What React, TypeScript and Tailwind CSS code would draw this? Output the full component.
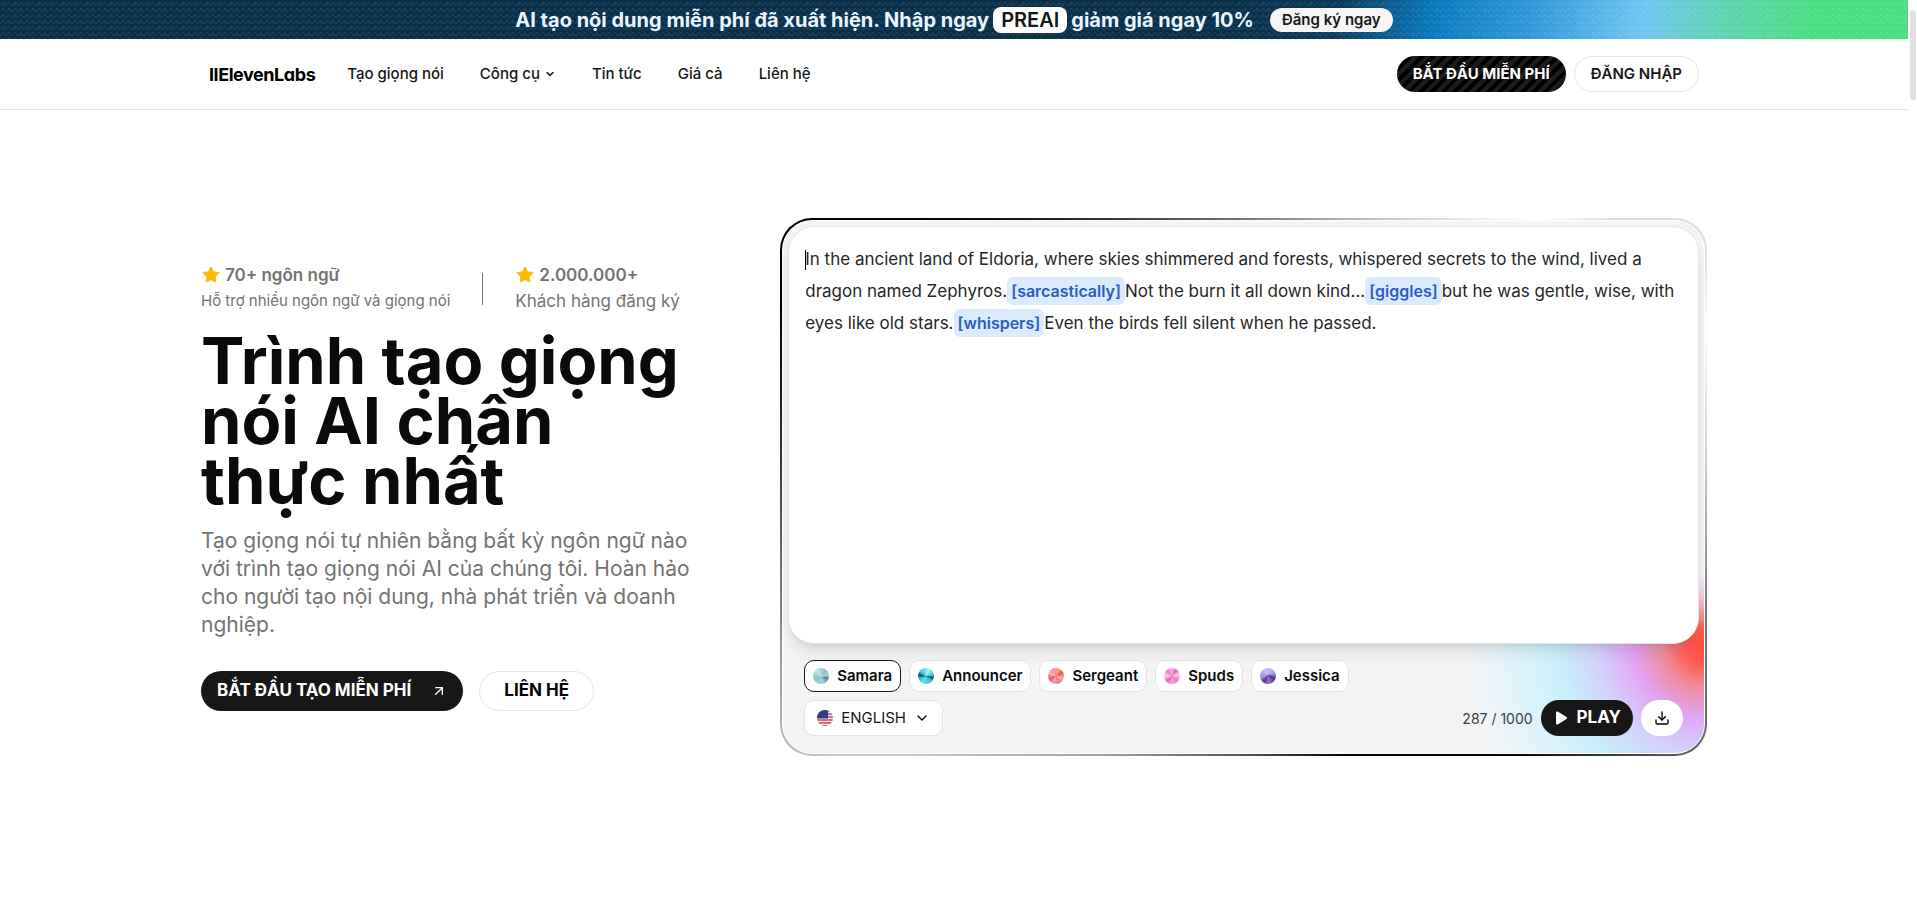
import { useState } from "react";
import { ArrowUpRight, ChevronDown, Download } from "lucide-react";
import clsx from "clsx";

const navLinks = [
  { label: "Tạo giọng nói" },
  { label: "Công cụ", menu: true },
  { label: "Tin tức" },
  { label: "Giá cả" },
  { label: "Liên hệ" },
];

const voices = [
  {
    name: "Samara",
    orb: "conic-gradient(from 100deg at 55% 55%, #4f7f8c, #7fb2bd 12%, #a9d4d8 20%, #8cc4cc 45%, #c5e4e6 60%, #8fc3ca 80%, #a8d0d5 94%, #4f7f8c)",
  },
  {
    name: "Announcer",
    orb: "conic-gradient(from 100deg at 50% 52%, #124c60, #35bcd6 8%, #6be0ee 30%, #35bcd6 42%, #124c60 50%, #3cc6dc 58%, #a5f1f7 78%, #45c6dc 94%, #124c60)",
  },
  {
    name: "Sergeant",
    orb: "conic-gradient(from 20deg, #f9a77c, #e8556e 12%, #fbb78c 24%, #ee7b88 38%, #f7a0c0 50%, #e8556e 62%, #fbb78c 76%, #f08ab0 90%, #f9a77c)",
  },
  {
    name: "Spuds",
    orb: "conic-gradient(from 0deg, #f7b0e8, #e565b4 10%, #fbd0ee 22%, #ec7fc0 36%, #f2a0dc 50%, #e565b4 62%, #fbd0ee 76%, #ec7fc0 88%, #f7b0e8)",
  },
  {
    name: "Jessica",
    orb: "conic-gradient(from 120deg at 50% 45%, #4f2f86, #9a74d0 14%, #5a3a92 26%, #a58ae6 36%, #c9c4f7 60%, #b39cea 86%, #4f2f86)",
  },
];

function Star() {
  return (
    <svg viewBox="0 0 24 24" className="size-5 fill-[#fbbc05]" aria-hidden="true">
      <path
        d="M12 3l2.7 5.6 6.1.9-4.4 4.3 1 6.1L12 17l-5.4 2.9 1-6.1-4.4-4.3 6.1-.9z"
        stroke="#fbbc05"
        strokeWidth="2"
        strokeLinejoin="round"
      />
    </svg>
  );
}

function UsFlag() {
  return (
    <svg viewBox="0 0 16 16" className="size-4" aria-hidden="true">
      <clipPath id="flag">
        <circle cx="8" cy="8" r="8" />
      </clipPath>
      <g clipPath="url(#flag)">
        <rect width="16" height="16" fill="#f3e9ee" />
        <path d="M0 1h16M0 4h16M0 7h16M0 10h16M0 13h16M0 16h16" stroke="#d0455c" strokeWidth="1.4" />
        <rect width="11" height="8.5" fill="#2c3f7c" />
      </g>
    </svg>
  );
}

function Tag({ name }: { name: string }) {
  return (
    <span className="rounded-md bg-[#dbeafe] px-1 py-1 text-[16px] font-semibold text-[#2c5cc5]">
      {`[${name}]`}
    </span>
  );
}

function Banner() {
  return (
    <div className="relative flex h-[39px] items-center justify-center gap-4 bg-[linear-gradient(100deg,#0a2f4a_0%,#0a2f4a_64%,#0b3a5c_70%,#0879bd_75%,#2f97d8_80%,#6fc6f2_86%,#5fd3b4_90%,#4ade80_95%)]">
      <svg className="absolute inset-0 size-full opacity-10" aria-hidden="true">
        <pattern id="weave" width="12" height="12" patternUnits="userSpaceOnUse">
          <path d="M0 6l3-4 3 4 3-4 3 4M0 12l3-4 3 4 3-4 3 4M3 2v4M9 8v4" fill="none" stroke="#fff" />
        </pattern>
        <rect width="100%" height="100%" fill="url(#weave)" />
      </svg>
      <p className="relative flex items-center gap-1 text-[20px] font-bold text-[#eaf6ff]">
        AI tạo nội dung miễn phí đã xuất hiện. Nhập ngay
        <span className="rounded-lg bg-white px-2 leading-[26px] font-semibold text-neutral-900">PREAI</span>
        giảm giá ngay 10%
      </p>
      <a href="#" className="relative rounded-full bg-neutral-100 px-3 text-[15px] leading-[24px] font-semibold text-neutral-900">
        Đăng ký ngay
      </a>
    </div>
  );
}

function Header() {
  return (
    <header className="border-b border-[#e2e2e2]">
      <div className="mx-auto flex h-[70px] max-w-[1538px] items-center px-6">
        <a href="#" className="text-[18px] font-bold tracking-tight text-black [font-feature-settings:'cv11']">
          IIElevenLabs
        </a>
        <nav className="ml-8 flex items-center gap-9 text-[15px] font-medium text-neutral-900">
          {navLinks.map((l) => (
            <a key={l.label} href="#" className="flex items-center gap-1">
              {l.label}
              {l.menu && <ChevronDown className="size-3" strokeWidth={3} />}
            </a>
          ))}
        </nav>
        <div className="ml-auto flex gap-2 text-[15px] font-bold">
          <button className="h-9 rounded-full bg-[repeating-linear-gradient(135deg,#000_0_4px,#1c1c1c_4px_8px)] px-4 text-white">
            BẮT ĐẦU MIỄN PHÍ
          </button>
          <button className="h-9 rounded-full border border-neutral-200 px-4 font-semibold text-neutral-900">
            ĐĂNG NHẬP
          </button>
        </div>
      </div>
    </header>
  );
}

function Intro() {
  return (
    <section>
      <div className="flex items-center gap-8 text-neutral-500">
        <div>
          <p className="flex items-center gap-1 text-[17px] leading-6 font-semibold">
            <Star />
            70+ ngôn ngữ
          </p>
          <p className="text-[15px] leading-7">Hỗ trợ nhiều ngôn ngữ và giọng nói</p>
        </div>
        <div className="h-8 w-px bg-neutral-500" />
        <div>
          <p className="flex items-center gap-1 text-[17px] leading-6 font-semibold">
            <Star />
            2.000.000+
          </p>
          <p className="text-[17px] leading-7">Khách hàng đăng ký</p>
        </div>
      </div>
      <h1 className="mt-4 max-w-[496px] text-[65px] leading-[60px] font-bold text-neutral-950">
        Trình tạo giọng nói AI chân thực nhất
      </h1>
      <p className="mt-4 max-w-[510px] text-[21px] leading-7 text-neutral-500">
        Tạo giọng nói tự nhiên bằng bất kỳ ngôn ngữ nào với trình tạo giọng nói AI của chúng tôi. Hoàn hảo cho
        người tạo nội dung, nhà phát triển và doanh nghiệp.
      </p>
      <div className="mt-8 flex gap-4 text-[17px]">
        <button className="flex h-10 items-center gap-5 rounded-full bg-neutral-900 px-4 font-bold text-white">
          BẮT ĐẦU TẠO MIỄN PHÍ
          <ArrowUpRight className="size-4" />
        </button>
        <button className="h-10 rounded-full border border-neutral-200 px-6 font-bold text-black">LIÊN HỆ</button>
      </div>
    </section>
  );
}

function Player() {
  const [voice, setVoice] = useState("Samara");

  return (
    <section className="rounded-[32px] bg-[conic-gradient(#777_0deg,#fff_48deg,#ddd_54deg,#ddd_62deg,#fff_71deg,#ccc_88deg,#777_105deg,#666_120deg,#000_135deg,#000_158deg,#555_180deg,#999_205deg,#ccc_235deg,#999_250deg,#333_275deg,#000_292deg,#000_310deg,#777_360deg)] p-[2px]">
      <div className="rounded-[30px] border border-white bg-[linear-gradient(to_bottom,#f4f4f5_66%,transparent_76%),radial-gradient(circle_at_100%_80%,#ff4d3d_0,#ff5f58_20px,#f08a9a_40px,#e3a4f5_70px,#d3d0fb_105px,#c8f0fb_145px,#e0f3fb_190px,#f4f4f5_240px)] p-[5px]">
        <div
          role="textbox"
          aria-label="Văn bản"
          aria-multiline="true"
          contentEditable
          suppressContentEditableWarning
          className="h-[418px] rounded-[26px] border border-neutral-200 bg-white py-4 pr-2 pl-4 text-[17px] leading-8 text-neutral-800 shadow-lg outline-none"
        >
          <span className="-mr-px inline-block h-5 w-px bg-black align-middle" />
          In the ancient land of Eldoria, where skies shimmered and forests, whispered secrets to the wind, lived a
          dragon named Zephyros.
          <Tag name="sarcastically" />
          Not the burn it all down kind...
          <Tag name="giggles" />
          but he was gentle, wise, with eyes like old stars.
          <Tag name="whispers" />
          Even the birds fell silent when he passed.
        </div>
        <div className="px-4 pt-4 pb-3">
          <div className="flex flex-wrap gap-2">
            {voices.map((v) => (
              <button
                key={v.name}
                aria-pressed={voice === v.name}
                onClick={() => setVoice(v.name)}
                className={clsx(
                  "flex h-8 items-center gap-2 rounded-[10px] border bg-white px-2 text-[15px] font-semibold text-neutral-950",
                  voice === v.name ? "border-neutral-900" : "border-neutral-200"
                )}
              >
                <span className="size-4 rounded-full" style={{ background: v.orb }} />
                {v.name}
              </button>
            ))}
          </div>
          <div className="mt-2 flex items-center">
            <label className="relative flex h-9 items-center rounded-[10px] border border-neutral-200 bg-white pl-3">
              <UsFlag />
              <select aria-label="Ngôn ngữ" className="appearance-none bg-transparent pr-9 pl-2 text-[15px] text-neutral-900">
                <option>ENGLISH</option>
              </select>
              <ChevronDown className="pointer-events-none absolute right-3 size-4" />
            </label>
            <span className="mr-2 ml-auto text-[14px] text-neutral-700">287 / 1000</span>
            <button className="flex h-9 items-center gap-2 rounded-full bg-neutral-900 px-3 text-[17px] font-bold text-white">
              <svg viewBox="0 0 16 16" className="size-4 fill-white" aria-hidden="true">
                <path d="M3 2.600c0-.9 1-1.400 1.700-1L13.500 7.100c.7.400.7 1.400 0 1.800L4.700 14.400c-.7.400-1.700-.1-1.700-1z" />
              </svg>
              PLAY
            </button>
            <button aria-label="Tải xuống" className="ml-2 flex h-9 w-[42px] items-center justify-center rounded-full bg-white">
              <Download className="size-4" />
            </button>
          </div>
        </div>
      </div>
    </section>
  );
}

export default function App() {
  return (
    <div className="flex min-h-screen bg-white font-['Inter',sans-serif]">
      <div className="min-w-0 flex-1">
        <Banner />
        <Header />
        <main className="mx-auto grid max-w-[1538px] grid-cols-[minmax(0,5fr)_minmax(0,8fr)] items-center px-4 pt-[108px]">
          <Intro />
          <Player />
        </main>
      </div>
      <div className="w-[9px] bg-white pt-[10px]">
        <div className="mx-auto h-[90px] w-[6px] rounded-full bg-[#e0e0e0]" />
      </div>
    </div>
  );
}
